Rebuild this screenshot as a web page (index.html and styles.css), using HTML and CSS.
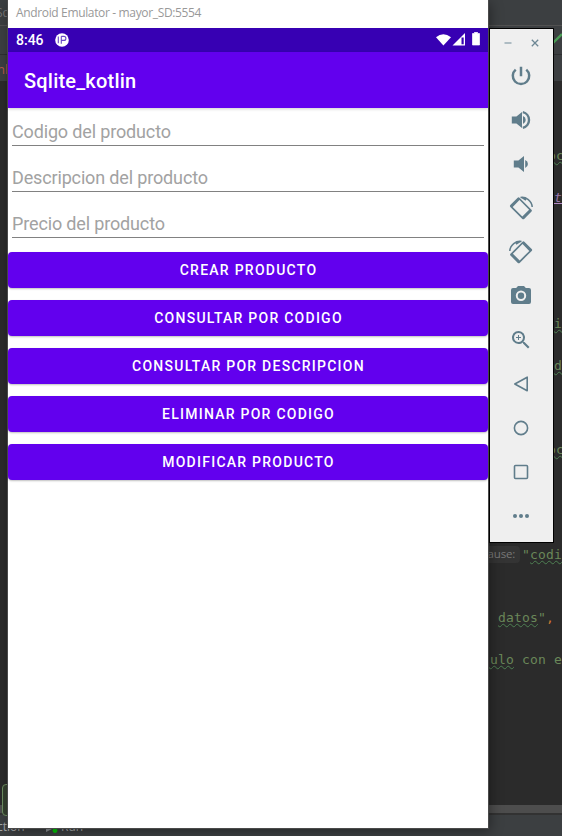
FILE: index.html
```html
<!DOCTYPE html>
<html lang="es">
<head>
<meta charset="utf-8">
<title>Android Emulator</title>
<link rel="stylesheet" href="styles.css">
</head>
<body>
<div class="desktop">
  <div class="ide">
    <div class="ide-menu">Sq</div>
    <div class="ide-toolbar"><svg class="check" width="12" height="14" viewBox="0 0 12 14"><path d="M0 11L10 1" fill="none" stroke="#499c54" stroke-width="2.4"/></svg></div>
    <div class="ide-tabs">nl</div>
    <div class="editor">
      <div class="line"></div><div class="line"></div><div class="line"></div>
      <div class="line edge"><u>oc</u></div>
      <div class="line"></div>
      <div class="line tag"><u>t</u></div>
      <div class="line"></div><div class="line"></div><div class="line"></div><div class="line"></div><div class="line"></div>
      <div class="line tail"><u>i</u></div>
      <div class="line"></div>
      <div class="line tail"><u>d</u></div>
      <div class="line"></div><div class="line"></div><div class="line"></div>
      <div class="line edge"><u>oc</u></div>
      <div class="line"></div><div class="line"></div><div class="line"></div><div class="line"></div>
      <div class="line call"><span class="hint">ause:</span><span>"<u>codi</u></span></div>
      <div class="line"></div><div class="line"></div>
      <div class="line body">s <u>datos</u>"<b>,</b></div>
      <div class="line"></div>
      <div class="line body"><u>culo</u> con e</div>
    </div>
    <div class="scrollbar"></div>
    <div class="ide-status"><span class="ction">ction</span><svg width="15" height="16" viewBox="0 0 15 16"><path d="M1 4l8 4-8 4z" fill="#8b9093"/><circle cx="10" cy="10.500" r="2.400" fill="#00c800"/></svg><span>Run</span></div>
    <div class="selection"></div>
  </div>

  <main class="phone">
    <div class="titlebar"><span>Android Emulator - mayor_SD:5554</span></div>
    <div class="statusbar">
      <span class="clock">8:46</span>
      <svg class="notice" width="14" height="14" viewBox="0 0 14 14"><circle cx="7" cy="7" r="6.800" fill="#fff"/><path d="M3.300 3.600v6.600M6.300 3.200v7.600M6.300 3.400h2.600a2 2 0 010 4H6.300" fill="none" stroke="#6a45c6" stroke-width="1.100"/></svg>
      <svg class="signals" width="46" height="16" viewBox="0 0 46 16"><path d="M0 5.200Q7.200 -.6 15 5.200L7.400 13.500z" fill="#fff"/><path d="M16.500 13.500L29 1v12.500z" fill="#fff"/><path d="M25.500 5.500h2.200v6.800h-2.200z" fill="#3700b3"/><path d="M36.500 1.500h2V.2h3v1.300h2V13h-7z" fill="#fff" stroke="#fff" stroke-width=".7" stroke-linejoin="round"/></svg>
    </div>
    <header class="appbar"><h1>Sqlite_kotlin</h1></header>
    <form class="form">
      <input class="field f1" placeholder="Codigo del producto">
      <input class="field f2" placeholder="Descripcion del producto">
      <input class="field f3" placeholder="Precio del producto">
      <button type="button">CREAR PRODUCTO</button>
      <button type="button">CONSULTAR POR CODIGO</button>
      <button type="button">CONSULTAR POR DESCRIPCION</button>
      <button type="button">ELIMINAR POR CODIGO</button>
      <button type="button">MODIFICAR PRODUCTO</button>
    </form>
  </main>

  <aside class="controls">
    <div class="window-buttons">
      <svg width="8" height="8" viewBox="0 0 8 8"><path d="M.5 4h7" stroke="#9dafb8" stroke-width="1.600"/></svg>
      <svg width="8" height="8" viewBox="0 0 8 8"><path d="M.8.800l6.400 6.400M7.200.8L.8 7.200" stroke="#6d8794" stroke-width="1.300"/></svg>
    </div>
    <div class="tool stroke"><svg viewBox="0 0 22 22"><path d="M11 1.800v9.400M5.700 4.600a8.200 8.200 0 1010.600 0"/></svg></div>
    <div class="tool"><svg viewBox="0 0 22 22"><path d="M1.800 7.600h4.600L12 3v16l-5.600-4.600H1.800zM13 7a4.300 4.300 0 010 8z"/><path d="M12.800 3.200a8 8 0 010 15.600" fill="none" stroke="#607d8b" stroke-width="2.400"/></svg></div>
    <div class="tool"><svg viewBox="0 0 22 22"><path d="M3.800 7.400h4.600L14 3v16l-5.600-4.400H3.800zM15.200 7a4.300 4.300 0 010 8z"/></svg></div>
    <div class="tool"><svg class="big" viewBox="0 0 24 24"><path transform="translate(11.900 12.300) rotate(45)" fill-rule="evenodd" d="M-8.500-6.500h17a1.300 1.300 0 011.300 1.300v10.400a1.300 1.300 0 01-1.300 1.300h-17a1.300 1.300 0 01-1.300-1.300v-10.400a1.300 1.300 0 011.300-1.300zM-6.800-4.800v9.600H6.800v-9.600z"/><path d="M11.500 1.500c5.500-1 11.300 3.500 11.700 9.500M13 1.500l4 2.500" fill="none" stroke="#607d8b" stroke-width="1.500"/></svg></div>
    <div class="tool"><svg class="big flip" viewBox="0 0 24 24"><path transform="translate(11.900 12.300) rotate(45)" fill-rule="evenodd" d="M-8.500-6.500h17a1.300 1.300 0 011.300 1.300v10.400a1.300 1.300 0 01-1.300 1.300h-17a1.300 1.300 0 01-1.300-1.300v-10.400a1.300 1.300 0 011.300-1.300zM-6.800-4.800v9.600H6.800v-9.600z"/><path d="M11.500 1.500c5.500-1 11.300 3.500 11.700 9.500M13 1.500l4 2.500" fill="none" stroke="#607d8b" stroke-width="1.500"/></svg></div>
    <div class="tool"><svg class="big" viewBox="0 0 24 24"><circle cx="12" cy="11.700" r="3.200"/><path d="M9 2L7.170 4H4a2 2 0 00-2 2v12a2 2 0 002 2h16a2 2 0 002-2V6a2 2 0 00-2-2h-3.170L15 2zm3 14.900a5.200 5.200 0 110-10.400 5.200 5.200 0 010 10.400z"/></svg></div>
    <div class="tool"><svg class="big" viewBox="0 0 24 24"><path d="M15.500 14h-.79l-.28-.27A6.500 6.500 0 109.500 16c1.610 0 3.090-.59 4.230-1.570l.27.28v.79l5 4.990L20.490 19zm-6 0a4.500 4.500 0 110-9 4.500 4.500 0 010 9zm.500-7H9v2H7v1h2v2h1v-2h2V9h-2z"/></svg></div>
    <div class="tool outline"><svg viewBox="0 0 22 22"><path d="M17.200 4.200v13.600L4.800 11z"/></svg></div>
    <div class="tool outline"><svg viewBox="0 0 22 22"><circle cx="11" cy="11" r="6.600"/></svg></div>
    <div class="tool outline"><svg viewBox="0 0 22 22"><rect x="4.500" y="4.500" width="13" height="13" rx="1"/></svg></div>
    <div class="tool"><svg viewBox="0 0 22 22"><circle cx="5" cy="11" r="2"/><circle cx="11" cy="11" r="2"/><circle cx="17" cy="11" r="2"/></svg></div>
  </aside>
</div>
</body>
</html>
```

FILE: styles.css
```css
* { box-sizing: border-box; }
body { margin: 0; font-family: Roboto, "Liberation Sans", sans-serif; }
.desktop { position: relative; width: 562px; height: 836px; overflow: hidden; background: #2b2b2b; }

.ide { display: flex; flex-direction: column; height: 836px; font: 13px "Open Sans", sans-serif; }
.ide-menu { height: 26px; padding-top: 4px; background: #3c3f41; border-bottom: 1px solid #515151; color: #777; text-indent: -4px; font-size: 12px; }
.ide-toolbar { height: 29px; background: #3c3f41; border-bottom: 1px solid #2e3031; }
.check { display: block; margin: 7px 0 0 552px; }
.ide-tabs { height: 26px; background: #3c3f41; color: #b65a4c; padding-top: 5px; text-indent: -3px; }
.editor { height: 724px; padding-top: 1px; background: #2b2b2b; font: 13px "DejaVu Sans Mono", monospace; letter-spacing: .17px; color: #6a8759; overflow: hidden; }
.line { display: flex; align-items: center; height: 21px; white-space: pre; }
.line u { text-decoration: underline wavy #4e8052 1px; text-underline-offset: 1px; text-decoration-skip-ink: none; }
.edge { padding-left: 548px; }
.tail { padding-left: 554px; }
.tag { padding-left: 554px; color: #9876aa; font-style: italic; }
.tag u { text-decoration: underline solid #b389c5 1px; }
.call { padding-left: 476px; }
.hint { width: 45px; height: 17px; padding: 0 5px 0 0; margin-right: 2px; border-radius: 4px; background: #343434; color: #787878; font: 11.5px/16px "Open Sans", sans-serif; letter-spacing: -.2px; text-align: right; }
.body { padding-left: 482px; }
.body b { color: #cc7832; font-weight: 400; }
.scrollbar { height: 8px; background: #4d4d4d; }
.ide-status { display: flex; height: 23px; border-top: 2px solid #323232; background: #3c3f41; color: #a7a9aa; font-size: 12px; line-height: 24px; }
.ction { width: 45px; text-indent: -3px; }
.ide-status svg { margin: 5px 1px 0 0; }
.selection { position: absolute; left: 2px; top: 784px; width: 20px; height: 32px; border: 1px solid #6f8f63; border-radius: 4px; background: #34402f; }

.phone { position: absolute; left: 8px; top: 0; width: 480px; height: 828px; background: #fff; box-shadow: 0 0 0 1px #4a4a4a, 2px 3px 12px rgba(0,0,0,.4); }
.titlebar { height: 28px; padding-left: 8px; font: 12px/26px "Open Sans", sans-serif; color: #999; white-space: nowrap; }
.titlebar span { letter-spacing: -.35px; }
.statusbar { display: flex; align-items: center; height: 24px; padding: 0 6px 0 8px; background: #3700b3; color: #fff; }
.clock { font-size: 14px; font-weight: 500; width: 39px; }
.signals { margin-left: auto; margin-top: -1px; }
.appbar { display: flex; align-items: center; height: 56px; padding-left: 16px; background: #6200ee; box-shadow: 0 1px 3px rgba(0,0,0,.2); }
h1 { margin: 2px 0 0; color: #fff; font-size: 20px; font-weight: 500; line-height: 24px; letter-spacing: .2px; }
.form { display: flex; flex-direction: column; }
.field { width: 472px; height: 38px; margin: 0 4px 8px; padding: 10px 0 0; border: 0; border-bottom: 1px solid #818181; background: none; outline: 0; font: 18px Roboto, sans-serif; letter-spacing: -.15px; }
.field::placeholder { color: #a2a2a2; opacity: 1; }
.f3 { margin-bottom: 14px; }
button { height: 36px; margin-bottom: 12px; padding: 0 0 0 1px; border: 0; border-radius: 4px; background: #6200ee; color: #fff; font: 500 14px Roboto, sans-serif; letter-spacing: 1.25px; box-shadow: 0 1px 2px rgba(0,0,0,.25); }

.controls { position: absolute; left: 489px; top: 28px; width: 65px; height: 515px; border: 1px solid #000; background: #efefef; }
.window-buttons { display: flex; align-items: center; justify-content: space-between; height: 25px; padding: 2px 14px 0; }
.tool { display: flex; align-items: center; justify-content: center; height: 44px; padding-right: 1px; }
.tool svg { width: 22px; height: 22px; fill: #607d8b; }
.tool svg.big { width: 24px; height: 24px; }
.flip { transform: scaleX(-1); }
.tool.stroke svg { fill: none; stroke: #607d8b; stroke-width: 2.5; }
.tool.outline svg { fill: none; stroke: #607d8b; stroke-width: 1.6; stroke-linejoin: round; }
```
